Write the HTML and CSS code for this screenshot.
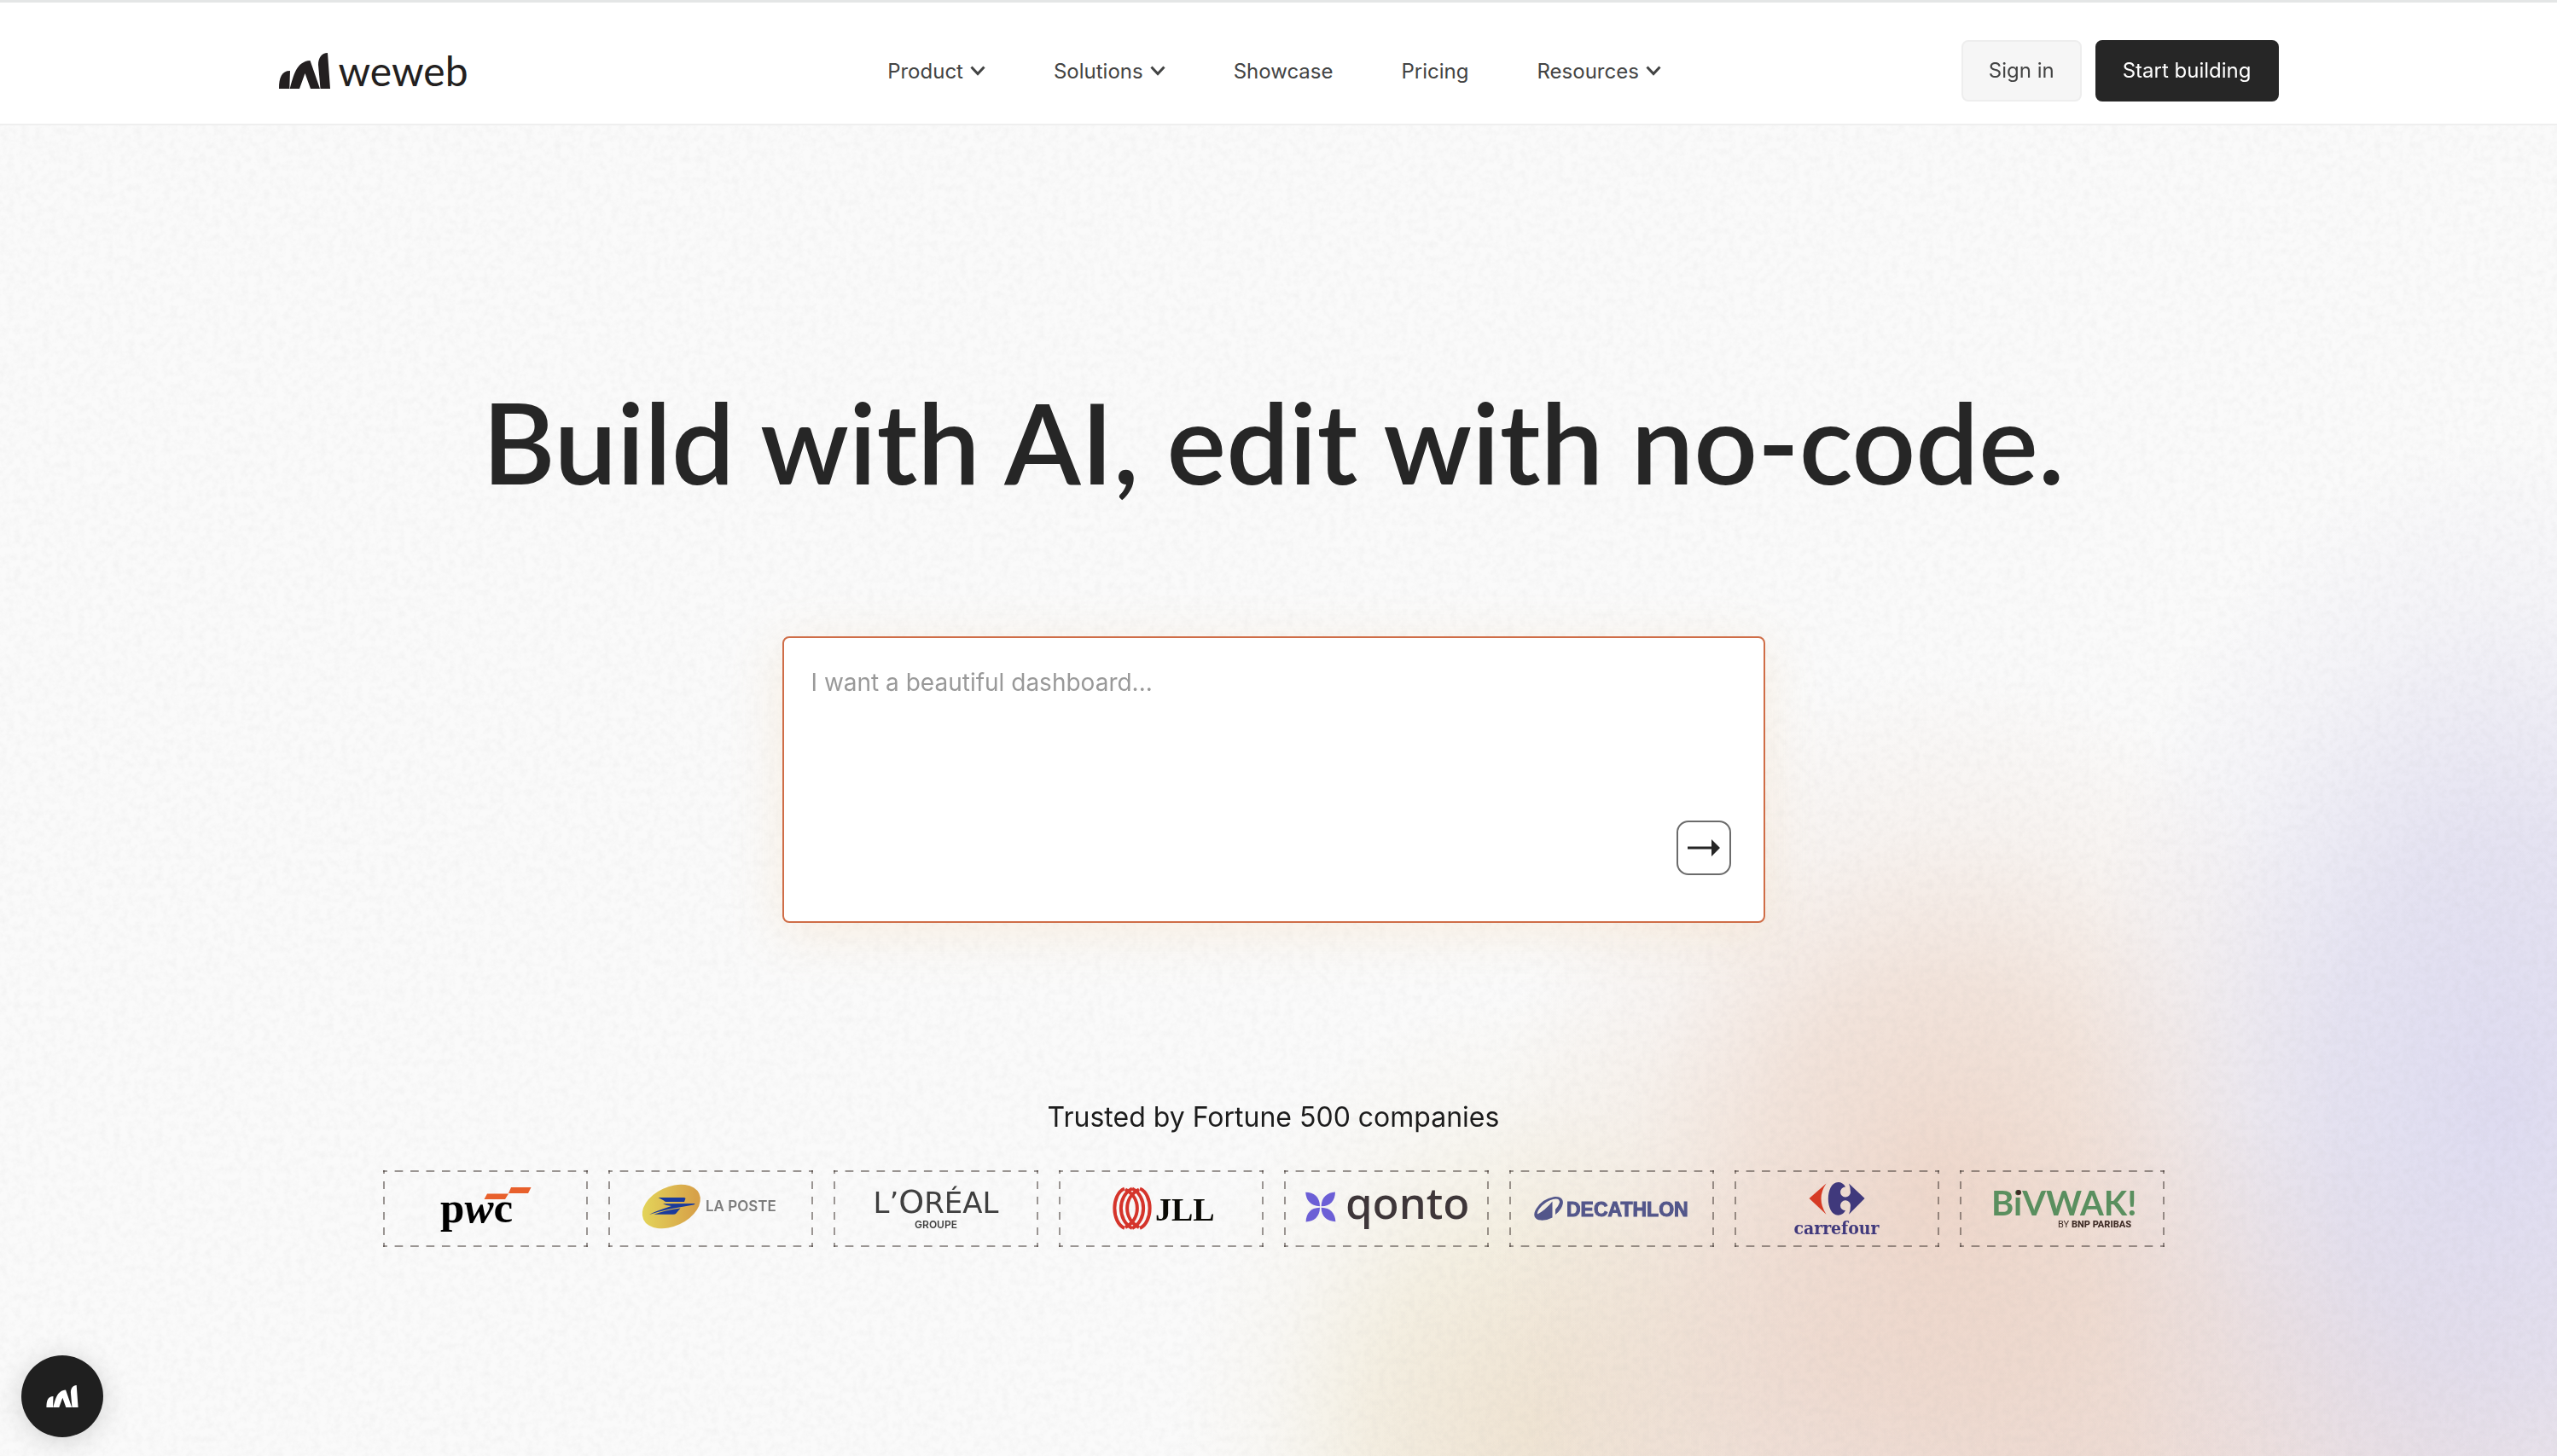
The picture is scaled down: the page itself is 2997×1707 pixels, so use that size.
FILE: index.html
```html
<!DOCTYPE html>
<html lang="en">
  <head>
    <title>WeWeb</title>
    <meta charset="UTF-8">
    <meta name="viewport" content="width=device-width, initial-scale=1.0">

    <link rel="stylesheet" href="styles.css">
  </head>

  <body>
    <!-- paper grain over the background -->
    <svg class="grain" aria-hidden="true">
      <filter id="noise" x="0" y="0" width="100%" height="100%">
        <feTurbulence type="fractalNoise" baseFrequency="0.12" numOctaves="3" seed="4"/>
        <feColorMatrix values="0 0 0 0 0.35  0 0 0 0 0.35  0 0 0 0 0.35  0.13 0 0 0 -0.048"/>
      </filter>
      <rect width="100%" height="100%" filter="url(#noise)"/>
    </svg>

    <header class="header">
      <div class="header-inner">
        <a class="brand" href="#">
          <svg class="brand-mark" viewBox="0 0 60 42" aria-hidden="true">
            <path id="mark" d="M0 42 C0 29 3 21 13 21 L12.3 42Z M12.7 42 C17 27 20 10 36.5 9 L48 42 H37 L30.5 24 L24 42Z M48.5 42 L46 14 C46 6 50 0 57 0 L60 42Z"/>
          </svg>
          <span>weweb</span>
        </a>

        <nav class="nav">
          <a href="#">Product <svg class="chevron" viewBox="0 0 18 12"><path d="M1.500 1.500 L9 9.500 L16.500 1.500"/></svg></a>
          <a href="#">Solutions <svg class="chevron" viewBox="0 0 18 12"><path d="M1.500 1.500 L9 9.500 L16.500 1.500"/></svg></a>
          <a href="#">Showcase</a>
          <a href="#">Pricing</a>
          <a href="#">Resources <svg class="chevron" viewBox="0 0 18 12"><path d="M1.500 1.500 L9 9.500 L16.500 1.500"/></svg></a>
        </nav>

        <div class="actions">
          <a class="btn btn-light" href="#">Sign in</a>
          <a class="btn btn-dark" href="#">Start building</a>
        </div>
      </div>
    </header>

    <main class="hero">
      <h1>Build with AI, edit with no-code.</h1>

      <form class="prompt">
        <textarea aria-label="Describe your app" placeholder="I want a beautiful dashboard..."></textarea>
        <button class="send" type="button" aria-label="Send">
          <svg viewBox="0 0 38 20"><path d="M0 8.500H28V0L38 10L28 20V11.500H0Z"/></svg>
        </button>
      </form>

      <p class="trusted">Trusted by Fortune 500 companies</p>

      <ul class="logos">
        <li>
          <svg viewBox="0 0 240 90">
            <path fill="#e8602c" d="M122 27.500H147L143 34H118.500Z M150 20H173.500L170 27H147Z"/>
            <text class="pwc" x="67" y="61">p<tspan font-style="italic">w</tspan>c</text>
          </svg>
        </li>
        <li>
          <svg viewBox="0 0 240 90">
            <linearGradient id="gold" x1="0" x2="1" y1="0" y2="0.300">
              <stop offset="0" stop-color="#e5db5c"/>
              <stop offset="1" stop-color="#d7a148"/>
            </linearGradient>
            <ellipse cx="73.800" cy="42.500" rx="36" ry="23" transform="rotate(-25 73.800 42.500)" fill="url(#gold)"/>
            <path fill="#1a3a9c" d="M58.500 32H88.500Q91 32 90.200 34L89 37H67.500Q66 36.500 65 35.500Z M64 39.200L101 39Q102.500 39.400 100 40.500L83 43.500Q66 46 48 52Q55 48 74 42Q69 42 64 39.200Z M84.500 44.500L79.500 50.500Q78.500 51.700 76 51.700H53.500Q64 47.500 84.500 44.500Z"/>
            <text class="laposte" x="114" y="48">LA POSTE</text>
          </svg>
        </li>
        <li>
          <svg viewBox="0 0 240 90">
            <text class="loreal" x="120" y="50">L’<tspan class="loreal-o">O</tspan>RÉAL</text>
            <text class="groupe" x="120" y="68">GROUPE</text>
          </svg>
        </li>
        <li>
          <svg viewBox="0 0 240 90">
            <g class="jll-mark">
              <path d="M77 21.500C61.500 28 61.500 61 77 68"/>
              <path d="M86 21.500C68.500 30 68.500 59 86 68"/>
              <path d="M94 22.500C75.500 32 75.500 57 94 67"/>
              <path d="M78 22.500C96.500 32 96.500 57 78 67"/>
              <path d="M86 21.500C103.500 30 103.500 59 86 68"/>
              <path d="M95 21.500C110.500 28 110.500 61 95 68"/>
            </g>
            <text class="jll" x="113" y="59">JLL</text>
          </svg>
        </li>
        <li>
          <svg viewBox="0 0 240 90">
            <g fill="#6c5fd6" transform="translate(42.800 43)">
              <path id="petal" d="M-0.800 -0.800C-12 -1 -17 -8 -17.600 -17.200C-8 -17 -1 -12 -0.800 -0.800Z"/>
              <use href="#petal" transform="rotate(90)"/>
              <use href="#petal" transform="rotate(180)"/>
              <use href="#petal" transform="rotate(270)"/>
            </g>
            <text class="qonto" x="72" y="57">qonto</text>
          </svg>
        </li>
        <li>
          <svg viewBox="0 0 240 90">
            <path fill="#53568a" fill-rule="evenodd" d="M52 31.200C62 30 66 36 60.500 45Q58 49 54 52V46Q61 38 58 34.500Q55 32 47 35.500C38 40 32 48 33 51.500Q42 47 50.500 36.500V55.500Q44 59 37 58.600C29 58 27 52 32 44.500Q39 33.500 52 31.200Z"/>
            <text class="decathlon" x="67" y="54">DECATHLON</text>
          </svg>
        </li>
        <li>
          <svg viewBox="0 0 240 90">
            <path fill="#d63a24" d="M87.500 33L107.500 15.500Q95.500 33 107.500 51.800Z"/>
            <path fill="#40397c" d="M130 19.500Q127 14 121.500 14C106 14 106 52.700 121.500 52.700Q127 52.500 130 47.300A6 6 0 1 1 136 41Q136 47 134 51.800L152.600 33L134 15.500Q136 20 136 26A6 6 0 1 1 130 19.500Z"/>
            <text class="carrefour" x="119.500" y="75">carrefour</text>
          </svg>
        </li>
        <li>
          <svg viewBox="0 0 240 90">
            <text class="bivwak" x="37" y="53">BiVWAK!</text>
            <circle cx="69" cy="26" r="3" fill="#3d2b25"/>
            <text class="bnp" x="201" y="67">BY <tspan font-weight="800">BNP PARIBAS</tspan></text>
          </svg>
        </li>
      </ul>
    </main>

    <button class="chat" type="button" aria-label="Open chat">
      <svg viewBox="0 0 60 42"><use href="#mark"/></svg>
    </button>
  </body>
</html>
```
FILE: styles.css
```css
* {
  box-sizing: border-box;
}

body {
  margin: 0;
  min-height: 100vh;
  font-family: Inter, "Liberation Sans", sans-serif;
  font-size: 24px;
  color: #262626;
  background-color: #fafafa;
  background-image:
    radial-gradient(ellipse 17% 46% at 98% 76%, rgba(219, 216, 239, 0.9) 0%, rgba(220, 217, 238, 0.7) 40%, rgba(220, 217, 238, 0.2) 75%, rgba(220, 217, 238, 0) 100%),
    radial-gradient(ellipse 18% 36% at 76% 82%, rgba(236, 210, 196, 0.85) 0%, rgba(236, 212, 198, 0.6) 40%, rgba(236, 214, 200, 0.2) 70%, rgba(236, 214, 200, 0) 100%),
    radial-gradient(ellipse 30% 24% at 82% 100%, rgba(235, 214, 207, 0.8) 0%, rgba(235, 214, 207, 0.6) 45%, rgba(235, 214, 207, 0) 100%),
    radial-gradient(ellipse 14% 30% at 60% 98%, rgba(239, 230, 206, 0.85) 0%, rgba(239, 230, 206, 0.55) 45%, rgba(239, 230, 206, 0.15) 75%, rgba(239, 230, 206, 0) 100%);
}

a {
  color: inherit;
  text-decoration: none;
}

.grain {
  position: fixed;
  inset: 0;
  z-index: -1;
  width: 100%;
  height: 100%;
}

/* header */

.header {
  padding: 44px 32px 26px;
  background-color: #fff;
  border-top: 3px solid #e4e6e6;
  border-bottom: 2px solid #efefef;
}

.header-inner {
  display: grid;
  grid-template-columns: 1fr auto 1fr;
  align-items: center;
  max-width: 2344px;
  margin: 0 auto;
}

.brand {
  display: flex;
  align-items: center;
  gap: 10px;
  font-family: Lato, sans-serif;
  font-size: 48px;
  line-height: 56px;
  color: #231f20;
}

.brand-mark {
  width: 60px;
  height: 42px;
  fill: #231f20;
}

.nav {
  display: flex;
  gap: 80px;
  padding-right: 10px;
  color: #434444;
}

.nav a {
  display: flex;
  align-items: center;
  gap: 8px;
}

.chevron {
  width: 18px;
  height: 12px;
  fill: none;
  stroke: #434444;
  stroke-width: 3;
}

.actions {
  display: flex;
  justify-content: flex-end;
  gap: 16px;
}

.btn {
  padding: 0 30px;
  line-height: 68px;
  border: 2px solid #262626;
  border-radius: 8px;
}

.btn-light {
  color: #434444;
  background-color: #f6f6f6;
  border-color: #eee;
}

.btn-dark {
  color: #fff;
  background-color: #262626;
}

/* hero */

.hero {
  display: flex;
  flex-direction: column;
  align-items: center;
  padding: 291px 44px 160px 32px;
}

h1 {
  margin: 0 0 148px;
  font-family: Lato, sans-serif;
  font-size: 131px;
  font-weight: 600;
  line-height: 160px;
  text-align: center;
}

.prompt {
  display: flex;
  align-items: flex-end;
  width: 100%;
  max-width: 1152px;
  padding-right: 38px;
  background-color: #fff;
  border: 2px solid #cf6d47;
  border-radius: 8px;
  box-shadow: 0 12px 60px rgba(248, 204, 150, 0.24);
}

.prompt textarea {
  flex: 1;
  height: 332px;
  padding: 32px;
  font: 28px/40px Inter, sans-serif;
  color: #262626;
  background: none;
  border: none;
  outline: none;
  resize: none;
}

.prompt textarea::placeholder {
  color: #999;
}

.send {
  display: flex;
  align-items: center;
  justify-content: center;
  width: 64px;
  height: 64px;
  margin-bottom: 54px;
  padding: 0;
  background-color: #fff;
  border: 2px solid #6b6b6b;
  border-radius: 14px;
  cursor: pointer;
}

.send svg {
  width: 38px;
  height: 20px;
  fill: #262626;
}

.trusted {
  margin: 208px 0 42px;
  font-size: 32px;
  line-height: 40px;
  color: #1c1c1c;
}

/* client logos */

.logos {
  display: grid;
  grid-template-columns: repeat(8, 1fr);
  gap: 24px;
  width: 100%;
  max-width: 2088px;
  margin: 0;
  padding: 0;
  list-style: none;
}

/* long dashes, drawn as four repeated gradients */
.logos li {
  --dash: rgba(60, 50, 45, 0.5) 0 25%, transparent 25% 75%, rgba(60, 50, 45, 0.5) 75%;
  background:
    linear-gradient(90deg, var(--dash)) top left / 18px 2px round no-repeat,
    linear-gradient(90deg, var(--dash)) bottom left / 18px 2px round no-repeat,
    linear-gradient(var(--dash)) top left / 2px 18px no-repeat round,
    linear-gradient(var(--dash)) top right / 2px 18px no-repeat round;
}

.logos svg {
  display: block;
  width: 100%;
}

.pwc {
  font: bold 51px "Liberation Serif", serif;
  fill: #000;
}

.laposte {
  font: 600 17px Inter, sans-serif;
  fill: #7c7c7c;
}

.loreal {
  font: 34px "DejaVu Sans", sans-serif;
  fill: #3f3f3f;
  text-anchor: middle;
}

.loreal-o {
  font-size: 38px;
}

.groupe {
  font: 600 12px Inter, sans-serif;
  fill: #3f3f3f;
  text-anchor: middle;
}

.jll-mark {
  fill: none;
  stroke: #d5342b;
  stroke-width: 4;
}

.jll {
  font: bold 38px "Liberation Serif", serif;
  fill: #0a0a05;
}

.qonto {
  font: 500 51px "Noto Sans", sans-serif;
  fill: #3e3639;
}

.decathlon {
  font: bold 23px "Liberation Sans", sans-serif;
  fill: #53568a;
  stroke: #53568a;
}

.carrefour {
  font: bold 21px "DejaVu Serif Condensed", "DejaVu Serif", serif;
  fill: #40397c;
  text-anchor: middle;
}

.bivwak {
  font: bold 40px Lato, sans-serif;
  fill: #5a8f5f;
}

.bnp {
  font: 11px Roboto, sans-serif;
  fill: #3d2b25;
  text-anchor: end;
}

/* chat bubble */

.chat {
  position: fixed;
  left: 25px;
  bottom: 22px;
  display: flex;
  align-items: center;
  justify-content: center;
  width: 96px;
  height: 96px;
  padding: 0;
  background-color: #1f1f1f;
  border: none;
  border-radius: 50%;
  box-shadow: 0 4px 32px rgba(0, 0, 0, 0.16);
  cursor: pointer;
}

.chat svg {
  width: 38px;
  height: 26px;
  fill: #fff;
}
```
